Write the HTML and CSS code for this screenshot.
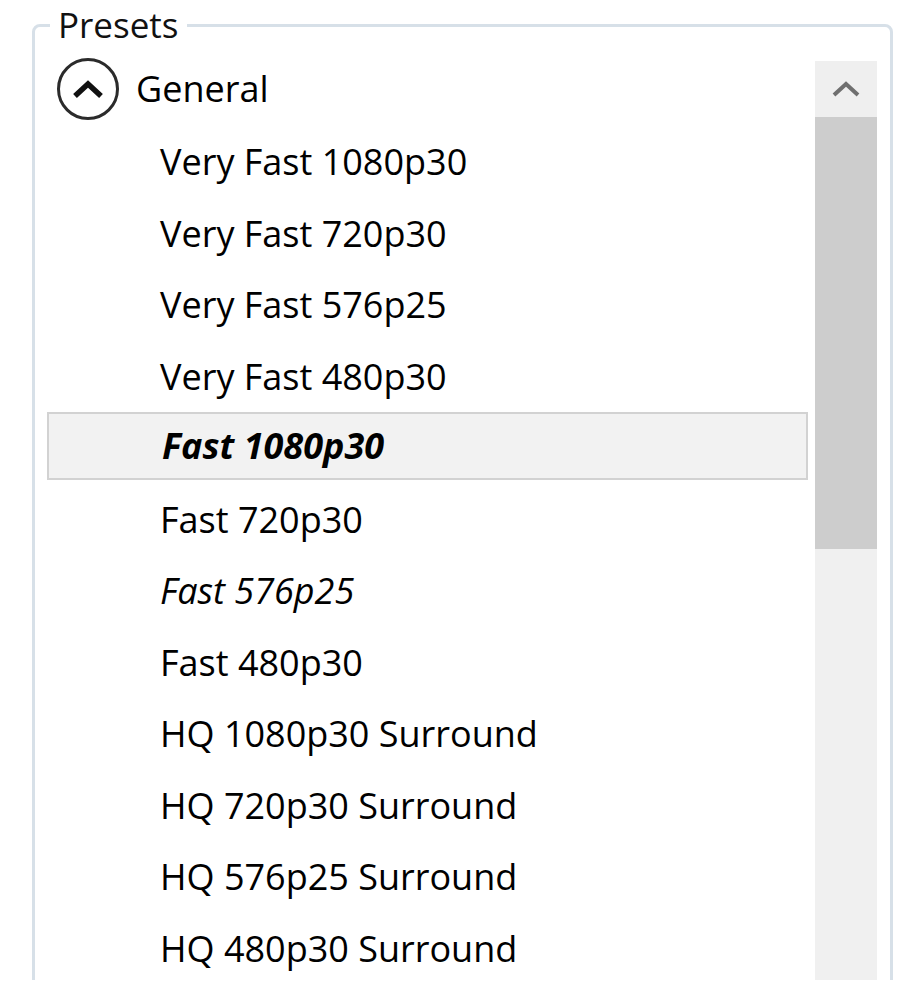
FILE: index.html
```html
<!DOCTYPE html>
<html lang="en">
<head>
    <meta charset="UTF-8">
    <title>Presets</title>
    <link rel="stylesheet" href="styles.css">
</head>
<body>
    <div class="window">
        <fieldset class="presets">
            <legend>Presets</legend>
            <div class="tree">
                <div class="list">
                    <div class="group">
                        <span class="toggle">
                            <svg width="64" height="64" viewBox="0 0 64 64">
                                <circle cx="32" cy="32" r="29.5" fill="none" stroke="#2b2b2b" stroke-width="3"/>
                                <path d="M19 39 L32 27 L45 39" fill="none" stroke="#111" stroke-width="5.5"/>
                            </svg>
                        </span>
                        <span class="group-name">General</span>
                    </div>
                    <div class="item">Very Fast 1080p30</div>
                    <div class="item">Very Fast 720p30</div>
                    <div class="item">Very Fast 576p25</div>
                    <div class="item">Very Fast 480p30</div>
                    <div class="item selected">Fast 1080p30</div>
                    <div class="item">Fast 720p30</div>
                    <div class="item default">Fast 576p25</div>
                    <div class="item">Fast 480p30</div>
                    <div class="item">HQ 1080p30 Surround</div>
                    <div class="item">HQ 720p30 Surround</div>
                    <div class="item">HQ 576p25 Surround</div>
                    <div class="item">HQ 480p30 Surround</div>
                </div>
                <div class="scrollbar">
                    <div class="scroll-up">
                        <svg width="30" height="20" viewBox="0 0 30 20">
                            <path d="M3 16 L15 5 L27 16" fill="none" stroke="#6f6f6f" stroke-width="4"/>
                        </svg>
                    </div>
                    <div class="thumb"></div>
                    <div class="track"></div>
                </div>
            </div>
        </fieldset>
    </div>
</body>
</html>
```

FILE: styles.css
```css
* {
    box-sizing: border-box;
}

body {
    margin: 0;
    background: #fff;
    font-family: 'Open Sans', 'Noto Sans', sans-serif;
    color: #000;
}

/* the screenshot is cut off before the bottom edge of the group box */
.window {
    height: 980px;
    overflow: hidden;
}

.presets {
    margin: 4px 8px 0 32px;
    padding: 0 13px 0 12px;
    border: 3px solid #d7e0e8;
    border-radius: 8px;
    height: 1040px;
}

.presets legend {
    margin-left: 3px;
    padding: 0 8px;
    font-size: 35px;
    line-height: 42px;
    color: #111;
}

.tree {
    display: flex;
    gap: 7px;
    padding-top: 5px;
}

.list {
    flex: 1;
}

.group {
    display: flex;
    align-items: center;
    height: 75px;
    padding-left: 9px;
}

.toggle {
    display: flex;
    width: 64px;
    height: 64px;
}

.group-name {
    margin-left: 16px;
    font-size: 36px;
}

.item {
    height: 71.5px;
    line-height: 71.5px;
    padding-left: 113px;
    font-size: 36px;
    white-space: nowrap;
}

.item.selected {
    background: #f2f2f2;
    border: 2px solid #d2d2d2;
    line-height: 64px;
    height: 68px;
    margin-bottom: 3.5px;
    font-weight: bold;
    font-style: italic;
}

.item.default {
    font-style: italic;
}

.scrollbar {
    width: 62px;
    margin-top: 10px;
    display: flex;
    flex-direction: column;
}

.scroll-up {
    height: 56px;
    background: #efefef;
    display: flex;
    align-items: center;
    justify-content: center;
}

.thumb {
    height: 432px;
    background: #cdcdcd;
}

.track {
    flex: 1;
    height: 500px;
    background: #f0f0f0;
}
```
